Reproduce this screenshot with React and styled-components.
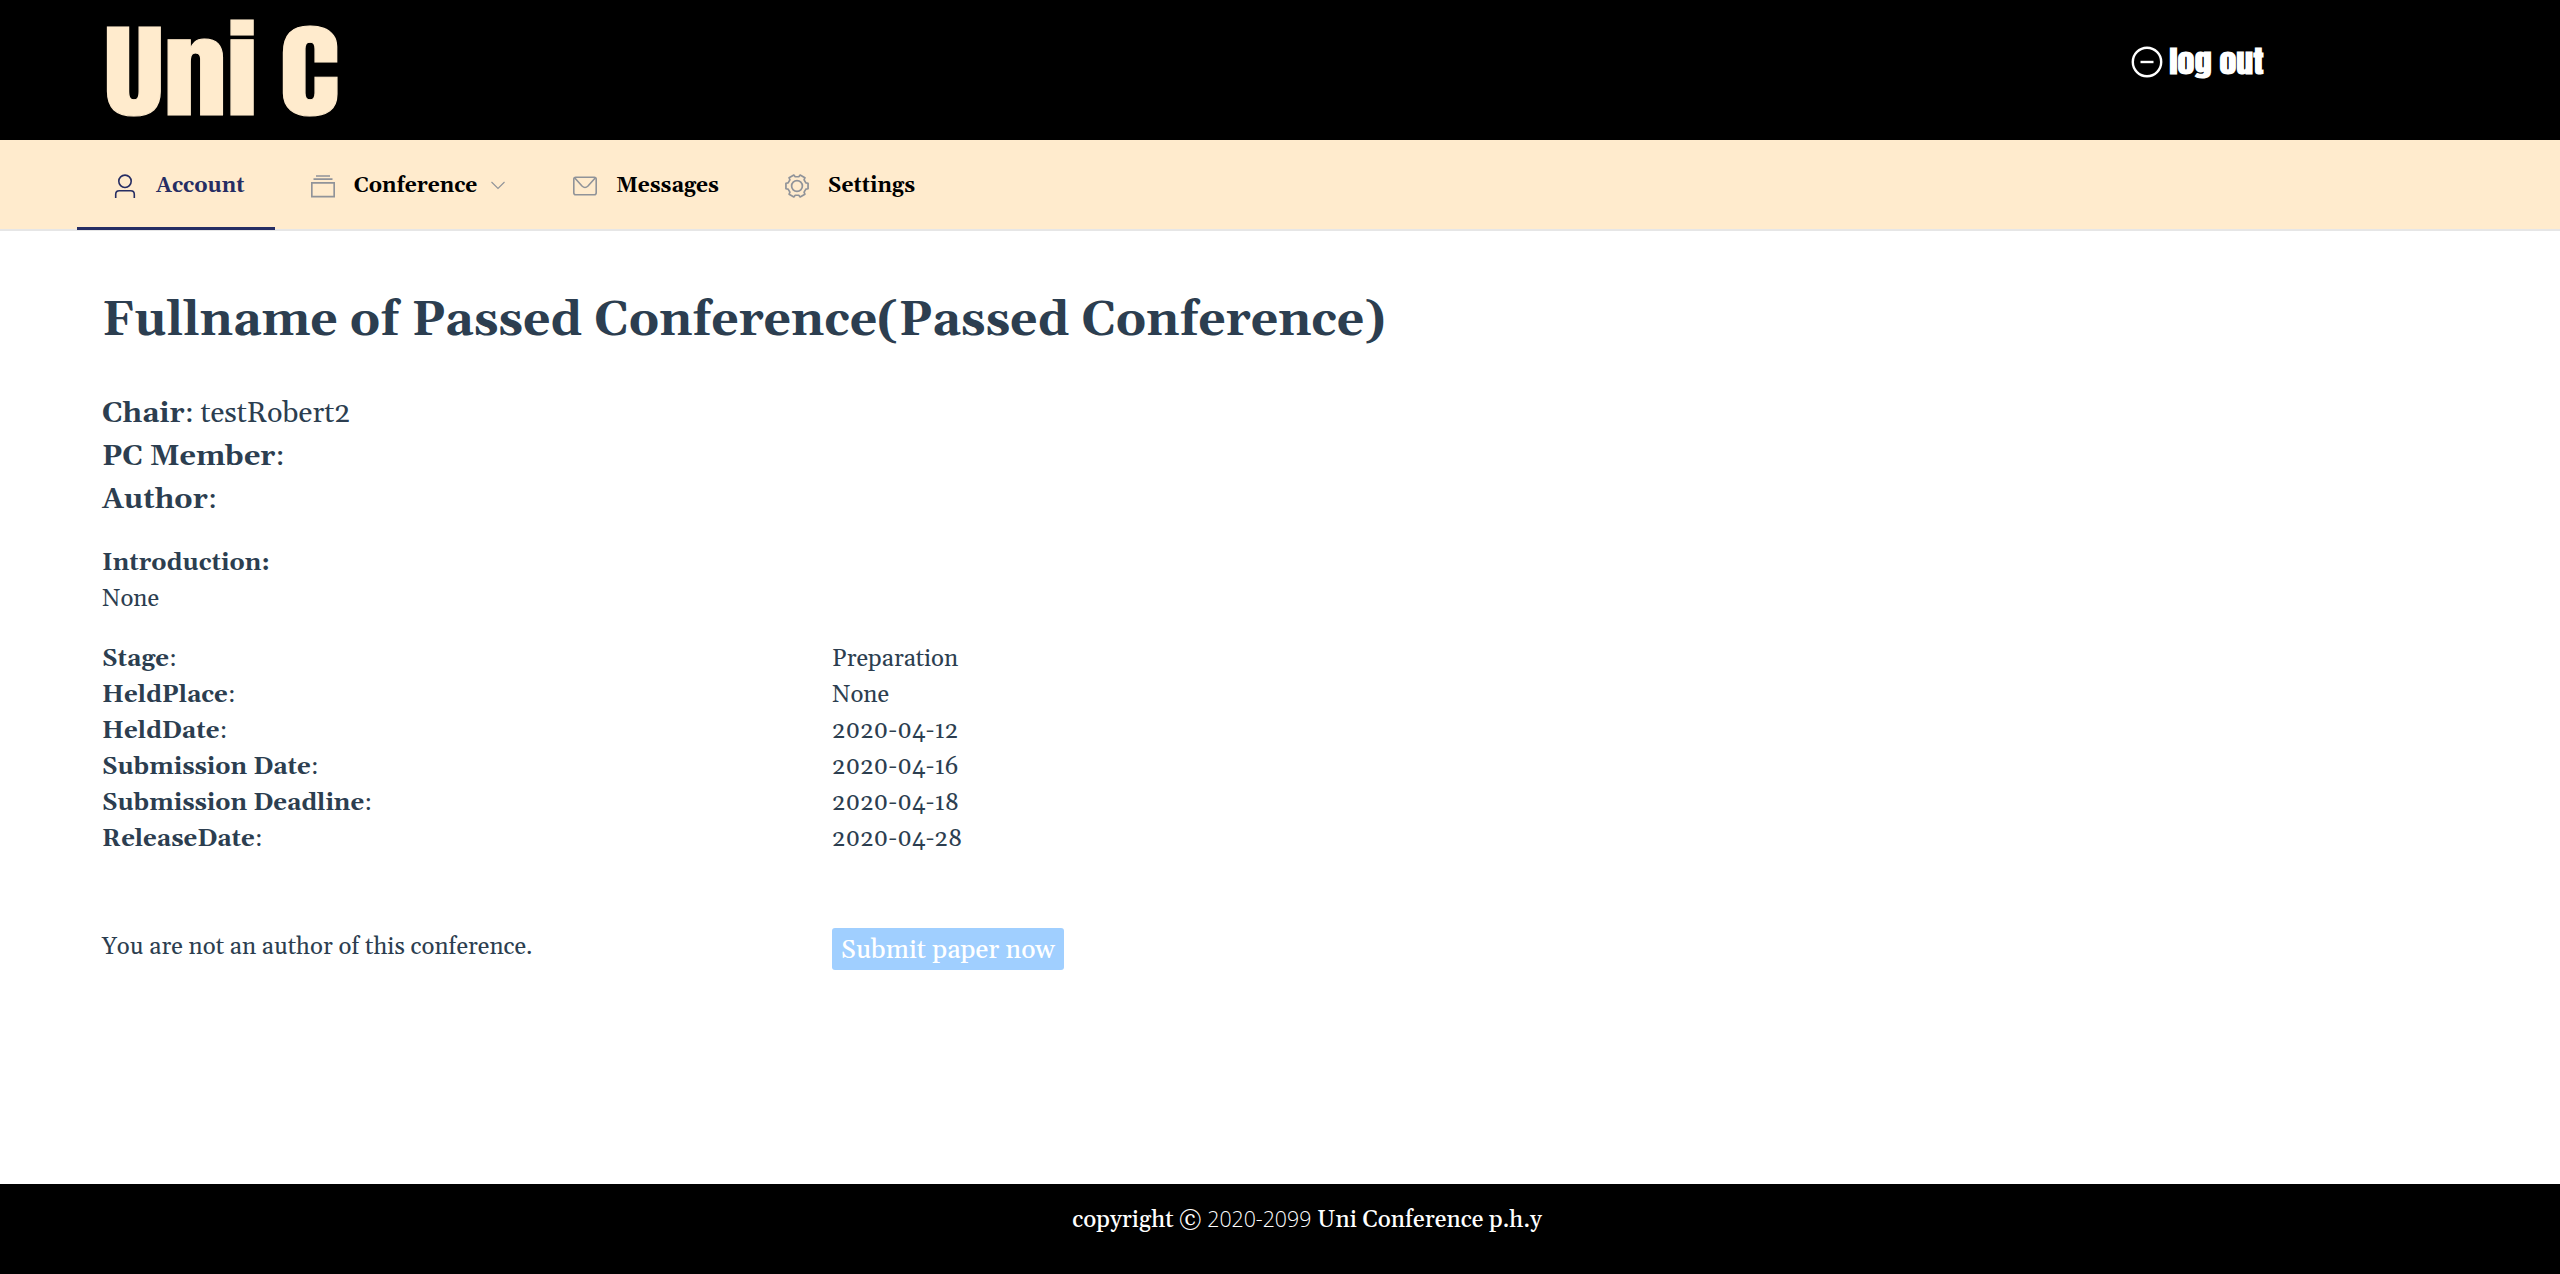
import React from "react";
import styled, { createGlobalStyle } from "styled-components";

const serif = 'Gelasio, Georgia, "Liberation Serif", serif';
const display = 'Anton, Impact, "Liberation Sans", sans-serif';

const GlobalStyle = createGlobalStyle`
  * { box-sizing: border-box; }
  body { margin: 0; background: #fff; font-family: ${serif}; color: #2c3e50; }
`;

const Page = styled.div`
  min-height: 100vh;
  display: flex;
  flex-direction: column;
`;

const Header = styled.header`
  height: 140px;
  padding: 0 296px 0 104px;
  display: flex;
  justify-content: space-between;
  background: #000;
`;

const Logo = styled.div`
  font-family: ${display};
  font-size: 103px;
  line-height: 144px;
  word-spacing: -6px;
  color: #ffebcd;
  white-space: nowrap;
  -webkit-text-stroke: 1px #ffebcd;
  transform: scaleX(1.225);
  transform-origin: left;
`;

const LogOut = styled.button`
  height: 124px;
  padding: 0;
  border: 0;
  background: none;
  display: flex;
  align-items: center;
  gap: 17px;
  color: #fff;
`;

const LogOutLabel = styled.span`
  font-family: ${display};
  font-size: 30px;
  line-height: 40px;
  font-weight: 700;
  transform: scaleX(1.13);
  transform-origin: right;
`;

const Nav = styled.nav`
  height: 91px;
  padding-left: 77px;
  display: flex;
  background: #ffebcd;
  box-shadow: inset 0 -2px #e6e6e6;
`;

const NavItem = styled.a`
  height: 90px;
  padding: 5px 30px 0 36px;
  display: flex;
  align-items: center;
  border-bottom: 3px solid ${(p) => (p.$active ? "#262d63" : "transparent")};
  color: ${(p) => (p.$active ? "#262d63" : "#909399")};
`;

const NavLabel = styled.span`
  margin-left: 19px;
  font-size: 21px;
  line-height: 32px;
  font-weight: 700;
  color: ${(p) => (p.$active ? "#262d63" : "#000")};
`;

const Chevron = styled.svg`
  margin: 0 1px 0 13px;
`;

const Main = styled.main`
  flex: 1;
  padding: 60px 0 0 102px;
`;

const Title = styled.h1`
  margin: 0 0 41px;
  font-size: 48px;
  line-height: 60px;
`;

const People = styled.div`
  margin-bottom: 23.4px;
  font-size: 28.8px;
  line-height: 43.2px;
`;

const Section = styled.section`
  margin-bottom: 24px;
  font-size: 24px;
  line-height: 36px;
`;

const Row = styled.div`
  display: grid;
  grid-template-columns: 730px 1fr;
  align-items: start;
  font-size: 24px;
  line-height: 36px;
`;

const ActionRow = styled(Row)`
  margin-top: 72px;
`;

const SubmitButton = styled.button`
  width: 232px;
  height: 42px;
  margin-top: -1px;
  padding: 4px 0 0;
  border: 0;
  border-radius: 3px;
  background: #a0cfff;
  color: #fff;
  font-family: ${serif};
  font-size: 25.6px;
  font-weight: 500;
  line-height: 38px;
  white-space: nowrap;
`;

const Footer = styled.footer`
  height: 90px;
  padding: 17px 0 0 54px;
  display: flex;
  justify-content: center;
  align-items: baseline;
  gap: 6px;
  background: #000;
  color: #fff;
  font-size: 23.4px;
  font-weight: 500;
  line-height: 36px;
`;

const Years = styled.span`
  font-family: "Open Sans", sans-serif;
  font-size: 21.3px;
  font-weight: 350;
`;

function UserIcon() {
  return (
    <svg width="24" height="24" viewBox="0 0 24 24" fill="none" stroke="currentColor" strokeWidth="1.6">
      <circle cx="12" cy="7.3" r="6.2" />
      <path d="M2.700 24v-3.600q0-3.600 3.600-3.600h11.400q3.600 0 3.600 3.600V24" />
    </svg>
  );
}

function StackIcon() {
  return (
    <svg width="24" height="24" viewBox="0 0 24 24" fill="none" stroke="currentColor" strokeWidth="1.7">
      <path d="M5 2h14M2.500 5.200h19M.8 8.800h22.400v13.800H.8z" />
    </svg>
  );
}

function MailIcon() {
  return (
    <svg width="24" height="24" viewBox="0 0 24 24" fill="none" stroke="currentColor" strokeWidth="1.6">
      <rect x=".8" y="3.2" width="22.4" height="17.6" rx="2" />
      <path d="M1.800 4l7.200 8q3 3 6 0l7.200-8" />
    </svg>
  );
}

const gearPoints = Array.from({ length: 6 }, (_, i) =>
  [
    [-19, 9.4],
    [-14, 11.4],
    [14, 11.4],
    [19, 9.4],
  ]
    .map(([offset, r]) => {
      const a = ((i * 60 + offset) * Math.PI) / 180;
      return `${(12 + r * Math.cos(a)).toFixed(2)},${(12 + r * Math.sin(a)).toFixed(2)}`;
    })
    .join(" ")
).join(" ");

function GearIcon() {
  return (
    <svg width="24" height="24" viewBox="0 0 24 24" fill="none" stroke="currentColor" strokeWidth="1.7" strokeLinejoin="round">
      <polygon points={gearPoints} />
      <circle cx="12" cy="12" r="5.4" />
    </svg>
  );
}

function ChevronIcon() {
  return (
    <Chevron width="16" height="24" viewBox="0 0 16 24" fill="none" stroke="#909399" strokeWidth="1.1">
      <path d="M1.500 8L8 14.500l6.500-6.500" />
    </Chevron>
  );
}

function MinusCircleIcon() {
  return (
    <svg width="32" height="32" viewBox="0 0 32 32" fill="none" stroke="#fff" strokeWidth="2.4">
      <circle cx="16" cy="16" r="14.2" />
      <path d="M9.500 16h13" />
    </svg>
  );
}

const navItems = [
  { label: "Account", Icon: UserIcon, active: true },
  { label: "Conference", Icon: StackIcon, menu: true },
  { label: "Messages", Icon: MailIcon },
  { label: "Settings", Icon: GearIcon },
];

const people = [
  ["Chair", "testRobert2"],
  ["PC Member", ""],
  ["Author", ""],
];

const details = [
  ["Stage", "Preparation"],
  ["HeldPlace", "None"],
  ["HeldDate", "2020-04-12"],
  ["Submission Date", "2020-04-16"],
  ["Submission Deadline", "2020-04-18"],
  ["ReleaseDate", "2020-04-28"],
];

export default function App() {
  return (
    <Page>
      <GlobalStyle />
      <Header>
        <Logo>Uni C</Logo>
        <LogOut>
          <MinusCircleIcon />
          <LogOutLabel>log out</LogOutLabel>
        </LogOut>
      </Header>
      <Nav>
        {navItems.map(({ label, Icon, active, menu }) => (
          <NavItem key={label} $active={active}>
            <Icon />
            <NavLabel $active={active}>{label}</NavLabel>
            {menu && <ChevronIcon />}
          </NavItem>
        ))}
      </Nav>
      <Main>
        <Title>Fullname of Passed Conference(Passed Conference)</Title>
        <People>
          {people.map(([role, name]) => (
            <div key={role}>
              <b>{role}</b>: {name}
            </div>
          ))}
        </People>
        <Section>
          <b>Introduction:</b>
          <div>None</div>
        </Section>
        {details.map(([name, value]) => (
          <Row key={name}>
            <span>
              <b>{name}</b>:
            </span>
            <span>{value}</span>
          </Row>
        ))}
        <ActionRow>
          <span>You are not an author of this conference.</span>
          <SubmitButton>Submit paper now</SubmitButton>
        </ActionRow>
      </Main>
      <Footer>
        <span>copyright ©</span>
        <Years>2020-2099</Years>
        <span>Uni Conference p.h.y</span>
      </Footer>
    </Page>
  );
}
